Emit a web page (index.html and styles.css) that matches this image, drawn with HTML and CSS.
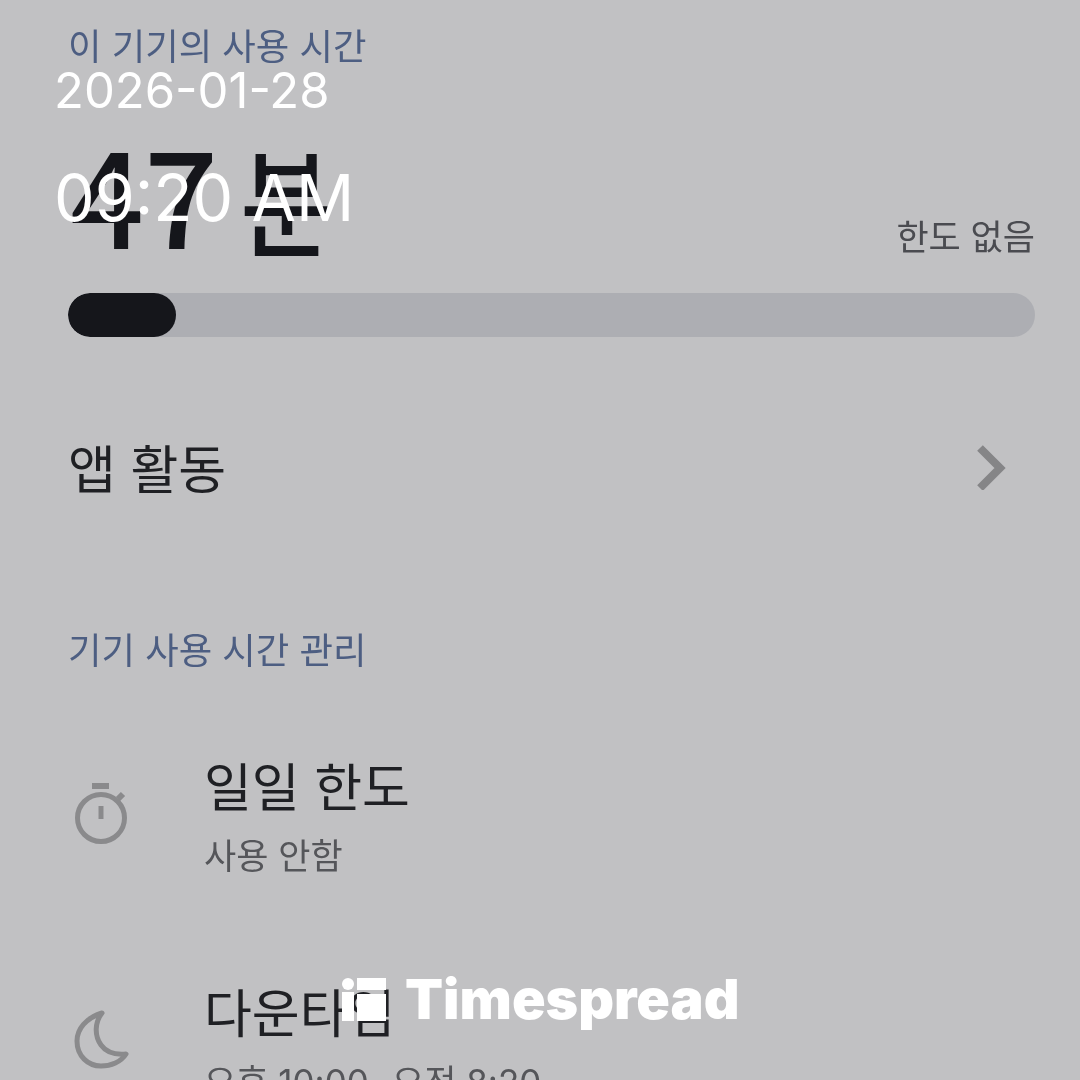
FILE: index.html
```html
<!DOCTYPE html>
<html lang="ko">
<head>
<meta charset="utf-8">
<title>이 기기의 사용 시간</title>
<link rel="stylesheet" href="styles.css">
</head>
<body>
<main class="screen">
  <h2 class="section-label first">이 기기의 사용 시간</h2>
  <div class="usage-row">
    <div class="usage-total"><span class="digits">47</span><span class="unit">분</span></div>
    <div class="limit-note">한도 없음</div>
  </div>
  <div class="track"><div class="fill"></div></div>
  <div class="activity-row">
    <span class="activity-label">앱 활동</span>
    <svg class="chevron" viewBox="0 0 30 46" width="30" height="46"><path d="M3 4 L23 24 L3 44" fill="none" stroke="#858587" stroke-width="8"/></svg>
  </div>
  <h2 class="section-label second">기기 사용 시간 관리</h2>
  <div class="item item-first">
    <svg class="item-icon" viewBox="0 0 56 64" width="56" height="64"><g fill="none" stroke="#8a8a8c" stroke-width="5"><circle cx="27" cy="36" r="23.5"/><path d="M27 24 V37" stroke-width="5"/><path d="M18 4 H35" stroke-width="6"/><path d="M44 17 L49 12" stroke-width="6"/></g></svg>
    <div class="item-text">
      <div class="item-title">일일 한도</div>
      <div class="item-sub">사용 안함</div>
    </div>
  </div>
  <div class="item item-second">
    <svg class="item-icon" viewBox="0 0 56 60" width="56" height="60"><path d="M28 3 C12 8 3 19 3 31 C3 46 14 56 27 56 C37 56 47 52 52 44 C41 45 32 42 27 35 C20 25 21 12 28 3 Z" fill="none" stroke="#8a8a8c" stroke-width="5" stroke-linejoin="round"/></svg>
    <div class="item-text">
      <div class="item-title">다운타임</div>
      <div class="item-sub">오후 10:00~오전 8:20</div>
    </div>
  </div>
</main>
<div class="stamp stamp-date">2026-01-28</div>
<div class="stamp stamp-time">09:20 AM</div>
<div class="brand">
  <svg class="brand-mark" viewBox="0 0 48 44" width="48" height="44"><circle cx="8" cy="6" r="6" fill="#fff"/><rect x="2" y="14" width="12" height="29" fill="#fff"/><rect x="17" y="0" width="29" height="12" fill="#fff"/><rect x="17" y="16" width="29" height="27" fill="#fff"/></svg>
  <span class="brand-name">Timespread</span>
</div>
</body>
</html>
```
FILE: styles.css
```css
html, body { margin: 0; padding: 0; }
body {
  width: 1080px;
  height: 1080px;
  overflow: hidden;
  position: relative;
  background: #c1c1c3;
  font-family: "Noto Sans CJK KR", "Noto Sans", sans-serif;
}
.screen {
  box-sizing: border-box;
  height: 1080px;
  overflow: hidden;
  padding: 0 45px 0 68px;
  color: #1c1d22;
  filter: blur(0.6px);
}
.section-label {
  margin: 0;
  font-size: 36.4px;
  font-weight: 400;
  line-height: 44px;
  color: #4d5e82;
}
.section-label.first { padding-top: 22px; }
.section-label.second { margin-top: 127px; }
.usage-row {
  display: flex;
  justify-content: space-between;
  align-items: flex-end;
  height: 214px;
}
.usage-total {
  display: flex;
  align-items: center;
  height: 120px;
  margin-bottom: 24px;
  padding-left: 2px;
  color: #15161b;
}
.digits {
  font-size: 130px;
  font-weight: 500;
  line-height: 120px;
  margin-bottom: 8px;
}
.unit {
  display: inline-block;
  margin-left: 22px;
  font-size: 100px;
  font-weight: 500;
  line-height: 120px;
  transform: translateY(2px) scaleY(1.17);
}
.limit-note {
  font-size: 35px;
  line-height: 44px;
  color: #4a4b50;
  margin-bottom: 23px;
}
.track {
  height: 44px;
  margin-top: 13px;
  border-radius: 22px;
  background: #adaeb3;
  overflow: hidden;
}
.fill {
  width: 108px;
  height: 100%;
  border-radius: 22px;
  background: #15161b;
}
.activity-row {
  display: flex;
  justify-content: space-between;
  align-items: center;
  height: 64px;
  margin-top: 98px;
  padding-right: 28px;
}
.activity-label {
  font-size: 52px;
  line-height: 64px;
  color: #1f2024;
}
.item {
  display: flex;
  align-items: center;
}
.item-first { margin-top: 83px; }
.item-second { margin-top: 101px; }
.item-icon {
  flex: none;
  margin-left: 6px;
  margin-right: 74px;
  margin-bottom: 4px;
}
.item-title {
  font-size: 52px;
  line-height: 64px;
  color: #1f2024;
}
.item-sub {
  margin-top: 17px;
  font-family: Inter, "Noto Sans CJK KR", sans-serif;
  font-size: 35px;
  line-height: 44px;
  color: #55565a;
}
.stamp {
  position: absolute;
  left: 54px;
  color: #fff;
  font-family: Inter, sans-serif;
  font-weight: 400;
  white-space: nowrap;
}
.stamp-date { top: 61px; font-size: 49px; line-height: 60px; }
.stamp-time { top: 160px; font-size: 64.500px; line-height: 76px; }
.brand {
  position: absolute;
  left: 340px;
  top: 971px;
  display: flex;
  align-items: center;
  gap: 17px;
}
.brand-mark { margin-top: 2px; }
.brand-name {
  font-family: Inter, sans-serif;
  font-weight: 900;
  font-size: 55.500px;
  line-height: 56px;
  color: #fff;
}
```
